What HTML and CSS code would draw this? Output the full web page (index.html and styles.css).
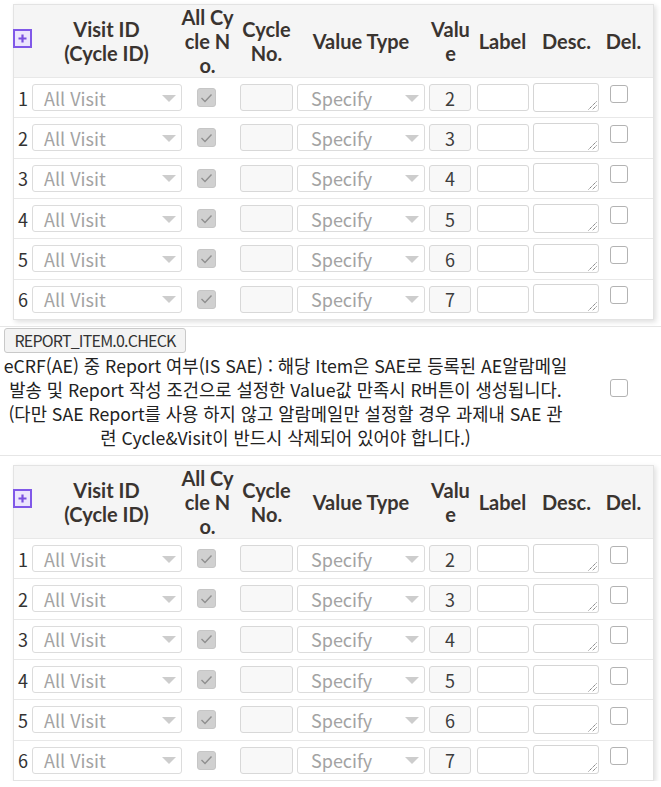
FILE: index.html
```html
<!DOCTYPE html>
<html lang="ko">
<head>
<meta charset="utf-8">
<title>Report Item</title>
<link rel="stylesheet" href="styles.css">
</head>
<body>
<div class="page">
  <div class="card-wrap">
    <div class="card">
      <div class="row head">
        <div class="c c0"><span class="plus"><svg width="11" height="11" viewBox="0 0 11 11"><path d="M5.5 1.5v8M1.5 5.5h8" stroke="#7a4fe0" stroke-width="2.2"/></svg></span></div>
        <div class="c c1"><span class="ln">Visit ID</span><span class="ln">(Cycle ID)</span></div>
        <div class="c c2"><span class="ln">All Cy</span><span class="ln">cle N</span><span class="ln">o.</span></div>
        <div class="c c3"><span class="ln">Cycle</span><span class="ln">No.</span></div>
        <div class="c c4">Value Type</div>
        <div class="c c5"><span class="ln">Valu</span><span class="ln">e</span></div>
        <div class="c c6">Label</div>
        <div class="c c7">Desc.</div>
        <div class="c c8">Del.</div>
      </div>
      <div class="row"><div class="c c0">1</div><div class="c c1"><div class="sel w150"><span>All Visit</span><i class="caret"></i></div></div><div class="c c2"><span class="chk-dis"><svg width="13" height="10" viewBox="0 0 13 10"><path d="M1.5 5l3.5 3.5 6.5-7" fill="none" stroke="#8f8f8f" stroke-width="1.4"/></svg></span></div><div class="c c3"><div class="inp w53 gray"></div></div><div class="c c4"><div class="sel w128 pad2"><span>Specify</span><i class="caret"></i></div></div><div class="c c5"><div class="inp w42 gray val">2</div></div><div class="c c6"><div class="inp w52"></div></div><div class="c c7"><div class="ta"><svg width="10" height="10" viewBox="0 0 10 10"><path d="M9.5 1.5l-8 8M9.5 5.5l-4 4" stroke="#666" stroke-width="1" stroke-dasharray="1.2 0.8"/></svg></div></div><div class="c c8"><span class="chk"></span></div></div>
      <div class="row"><div class="c c0">2</div><div class="c c1"><div class="sel w150"><span>All Visit</span><i class="caret"></i></div></div><div class="c c2"><span class="chk-dis"><svg width="13" height="10" viewBox="0 0 13 10"><path d="M1.5 5l3.5 3.5 6.5-7" fill="none" stroke="#8f8f8f" stroke-width="1.4"/></svg></span></div><div class="c c3"><div class="inp w53 gray"></div></div><div class="c c4"><div class="sel w128 pad2"><span>Specify</span><i class="caret"></i></div></div><div class="c c5"><div class="inp w42 gray val">3</div></div><div class="c c6"><div class="inp w52"></div></div><div class="c c7"><div class="ta"><svg width="10" height="10" viewBox="0 0 10 10"><path d="M9.5 1.5l-8 8M9.5 5.5l-4 4" stroke="#666" stroke-width="1" stroke-dasharray="1.2 0.8"/></svg></div></div><div class="c c8"><span class="chk"></span></div></div>
      <div class="row"><div class="c c0">3</div><div class="c c1"><div class="sel w150"><span>All Visit</span><i class="caret"></i></div></div><div class="c c2"><span class="chk-dis"><svg width="13" height="10" viewBox="0 0 13 10"><path d="M1.5 5l3.5 3.5 6.5-7" fill="none" stroke="#8f8f8f" stroke-width="1.4"/></svg></span></div><div class="c c3"><div class="inp w53 gray"></div></div><div class="c c4"><div class="sel w128 pad2"><span>Specify</span><i class="caret"></i></div></div><div class="c c5"><div class="inp w42 gray val">4</div></div><div class="c c6"><div class="inp w52"></div></div><div class="c c7"><div class="ta"><svg width="10" height="10" viewBox="0 0 10 10"><path d="M9.5 1.5l-8 8M9.5 5.5l-4 4" stroke="#666" stroke-width="1" stroke-dasharray="1.2 0.8"/></svg></div></div><div class="c c8"><span class="chk"></span></div></div>
      <div class="row"><div class="c c0">4</div><div class="c c1"><div class="sel w150"><span>All Visit</span><i class="caret"></i></div></div><div class="c c2"><span class="chk-dis"><svg width="13" height="10" viewBox="0 0 13 10"><path d="M1.5 5l3.5 3.5 6.5-7" fill="none" stroke="#8f8f8f" stroke-width="1.4"/></svg></span></div><div class="c c3"><div class="inp w53 gray"></div></div><div class="c c4"><div class="sel w128 pad2"><span>Specify</span><i class="caret"></i></div></div><div class="c c5"><div class="inp w42 gray val">5</div></div><div class="c c6"><div class="inp w52"></div></div><div class="c c7"><div class="ta"><svg width="10" height="10" viewBox="0 0 10 10"><path d="M9.5 1.5l-8 8M9.5 5.5l-4 4" stroke="#666" stroke-width="1" stroke-dasharray="1.2 0.8"/></svg></div></div><div class="c c8"><span class="chk"></span></div></div>
      <div class="row"><div class="c c0">5</div><div class="c c1"><div class="sel w150"><span>All Visit</span><i class="caret"></i></div></div><div class="c c2"><span class="chk-dis"><svg width="13" height="10" viewBox="0 0 13 10"><path d="M1.5 5l3.5 3.5 6.5-7" fill="none" stroke="#8f8f8f" stroke-width="1.4"/></svg></span></div><div class="c c3"><div class="inp w53 gray"></div></div><div class="c c4"><div class="sel w128 pad2"><span>Specify</span><i class="caret"></i></div></div><div class="c c5"><div class="inp w42 gray val">6</div></div><div class="c c6"><div class="inp w52"></div></div><div class="c c7"><div class="ta"><svg width="10" height="10" viewBox="0 0 10 10"><path d="M9.5 1.5l-8 8M9.5 5.5l-4 4" stroke="#666" stroke-width="1" stroke-dasharray="1.2 0.8"/></svg></div></div><div class="c c8"><span class="chk"></span></div></div>
      <div class="row"><div class="c c0">6</div><div class="c c1"><div class="sel w150"><span>All Visit</span><i class="caret"></i></div></div><div class="c c2"><span class="chk-dis"><svg width="13" height="10" viewBox="0 0 13 10"><path d="M1.5 5l3.5 3.5 6.5-7" fill="none" stroke="#8f8f8f" stroke-width="1.4"/></svg></span></div><div class="c c3"><div class="inp w53 gray"></div></div><div class="c c4"><div class="sel w128 pad2"><span>Specify</span><i class="caret"></i></div></div><div class="c c5"><div class="inp w42 gray val">7</div></div><div class="c c6"><div class="inp w52"></div></div><div class="c c7"><div class="ta"><svg width="10" height="10" viewBox="0 0 10 10"><path d="M9.5 1.5l-8 8M9.5 5.5l-4 4" stroke="#666" stroke-width="1" stroke-dasharray="1.2 0.8"/></svg></div></div><div class="c c8"><span class="chk"></span></div></div>
    </div>
  </div>

  <div class="report">
    <div class="report-main">
      <div class="btn">REPORT_ITEM.0.CHECK</div>
      <div class="desc">eCRF(AE) 중 Report 여부(IS SAE) : 해당 Item은 SAE로 등록된 AE알람메일 발송 및 Report 작성 조건으로 설정한 Value값 만족시 R버튼이 생성됩니다. (다만 SAE Report를 사용 하지 않고 알람메일만 설정할 경우 과제내 SAE 관련 Cycle&amp;Visit이 반드시 삭제되어 있어야 합니다.)</div>
    </div>
    <div class="report-del"><span class="chk"></span></div>
  </div>

  <div class="card-wrap">
    <div class="card">
      <div class="row head">
        <div class="c c0"><span class="plus"><svg width="11" height="11" viewBox="0 0 11 11"><path d="M5.5 1.5v8M1.5 5.5h8" stroke="#7a4fe0" stroke-width="2.2"/></svg></span></div>
        <div class="c c1"><span class="ln">Visit ID</span><span class="ln">(Cycle ID)</span></div>
        <div class="c c2"><span class="ln">All Cy</span><span class="ln">cle N</span><span class="ln">o.</span></div>
        <div class="c c3"><span class="ln">Cycle</span><span class="ln">No.</span></div>
        <div class="c c4">Value Type</div>
        <div class="c c5"><span class="ln">Valu</span><span class="ln">e</span></div>
        <div class="c c6">Label</div>
        <div class="c c7">Desc.</div>
        <div class="c c8">Del.</div>
      </div>
      <div class="row"><div class="c c0">1</div><div class="c c1"><div class="sel w150"><span>All Visit</span><i class="caret"></i></div></div><div class="c c2"><span class="chk-dis"><svg width="13" height="10" viewBox="0 0 13 10"><path d="M1.5 5l3.5 3.5 6.5-7" fill="none" stroke="#8f8f8f" stroke-width="1.4"/></svg></span></div><div class="c c3"><div class="inp w53 gray"></div></div><div class="c c4"><div class="sel w128 pad2"><span>Specify</span><i class="caret"></i></div></div><div class="c c5"><div class="inp w42 gray val">2</div></div><div class="c c6"><div class="inp w52"></div></div><div class="c c7"><div class="ta"><svg width="10" height="10" viewBox="0 0 10 10"><path d="M9.5 1.5l-8 8M9.5 5.5l-4 4" stroke="#666" stroke-width="1" stroke-dasharray="1.2 0.8"/></svg></div></div><div class="c c8"><span class="chk"></span></div></div>
      <div class="row"><div class="c c0">2</div><div class="c c1"><div class="sel w150"><span>All Visit</span><i class="caret"></i></div></div><div class="c c2"><span class="chk-dis"><svg width="13" height="10" viewBox="0 0 13 10"><path d="M1.5 5l3.5 3.5 6.5-7" fill="none" stroke="#8f8f8f" stroke-width="1.4"/></svg></span></div><div class="c c3"><div class="inp w53 gray"></div></div><div class="c c4"><div class="sel w128 pad2"><span>Specify</span><i class="caret"></i></div></div><div class="c c5"><div class="inp w42 gray val">3</div></div><div class="c c6"><div class="inp w52"></div></div><div class="c c7"><div class="ta"><svg width="10" height="10" viewBox="0 0 10 10"><path d="M9.5 1.5l-8 8M9.5 5.5l-4 4" stroke="#666" stroke-width="1" stroke-dasharray="1.2 0.8"/></svg></div></div><div class="c c8"><span class="chk"></span></div></div>
      <div class="row"><div class="c c0">3</div><div class="c c1"><div class="sel w150"><span>All Visit</span><i class="caret"></i></div></div><div class="c c2"><span class="chk-dis"><svg width="13" height="10" viewBox="0 0 13 10"><path d="M1.5 5l3.5 3.5 6.5-7" fill="none" stroke="#8f8f8f" stroke-width="1.4"/></svg></span></div><div class="c c3"><div class="inp w53 gray"></div></div><div class="c c4"><div class="sel w128 pad2"><span>Specify</span><i class="caret"></i></div></div><div class="c c5"><div class="inp w42 gray val">4</div></div><div class="c c6"><div class="inp w52"></div></div><div class="c c7"><div class="ta"><svg width="10" height="10" viewBox="0 0 10 10"><path d="M9.5 1.5l-8 8M9.5 5.5l-4 4" stroke="#666" stroke-width="1" stroke-dasharray="1.2 0.8"/></svg></div></div><div class="c c8"><span class="chk"></span></div></div>
      <div class="row"><div class="c c0">4</div><div class="c c1"><div class="sel w150"><span>All Visit</span><i class="caret"></i></div></div><div class="c c2"><span class="chk-dis"><svg width="13" height="10" viewBox="0 0 13 10"><path d="M1.5 5l3.5 3.5 6.5-7" fill="none" stroke="#8f8f8f" stroke-width="1.4"/></svg></span></div><div class="c c3"><div class="inp w53 gray"></div></div><div class="c c4"><div class="sel w128 pad2"><span>Specify</span><i class="caret"></i></div></div><div class="c c5"><div class="inp w42 gray val">5</div></div><div class="c c6"><div class="inp w52"></div></div><div class="c c7"><div class="ta"><svg width="10" height="10" viewBox="0 0 10 10"><path d="M9.5 1.5l-8 8M9.5 5.5l-4 4" stroke="#666" stroke-width="1" stroke-dasharray="1.2 0.8"/></svg></div></div><div class="c c8"><span class="chk"></span></div></div>
      <div class="row"><div class="c c0">5</div><div class="c c1"><div class="sel w150"><span>All Visit</span><i class="caret"></i></div></div><div class="c c2"><span class="chk-dis"><svg width="13" height="10" viewBox="0 0 13 10"><path d="M1.5 5l3.5 3.5 6.5-7" fill="none" stroke="#8f8f8f" stroke-width="1.4"/></svg></span></div><div class="c c3"><div class="inp w53 gray"></div></div><div class="c c4"><div class="sel w128 pad2"><span>Specify</span><i class="caret"></i></div></div><div class="c c5"><div class="inp w42 gray val">6</div></div><div class="c c6"><div class="inp w52"></div></div><div class="c c7"><div class="ta"><svg width="10" height="10" viewBox="0 0 10 10"><path d="M9.5 1.5l-8 8M9.5 5.5l-4 4" stroke="#666" stroke-width="1" stroke-dasharray="1.2 0.8"/></svg></div></div><div class="c c8"><span class="chk"></span></div></div>
      <div class="row"><div class="c c0">6</div><div class="c c1"><div class="sel w150"><span>All Visit</span><i class="caret"></i></div></div><div class="c c2"><span class="chk-dis"><svg width="13" height="10" viewBox="0 0 13 10"><path d="M1.5 5l3.5 3.5 6.5-7" fill="none" stroke="#8f8f8f" stroke-width="1.4"/></svg></span></div><div class="c c3"><div class="inp w53 gray"></div></div><div class="c c4"><div class="sel w128 pad2"><span>Specify</span><i class="caret"></i></div></div><div class="c c5"><div class="inp w42 gray val">7</div></div><div class="c c6"><div class="inp w52"></div></div><div class="c c7"><div class="ta"><svg width="10" height="10" viewBox="0 0 10 10"><path d="M9.5 1.5l-8 8M9.5 5.5l-4 4" stroke="#666" stroke-width="1" stroke-dasharray="1.2 0.8"/></svg></div></div><div class="c c8"><span class="chk"></span></div></div>
    </div>
  </div>
</div>
</body>
</html>
```

FILE: styles.css
```css
* { box-sizing: border-box; }
html, body { margin: 0; padding: 0; background: #fff; }
body {
  font-family: "Noto Sans CJK KR", "Noto Sans", sans-serif;
  font-size: 18px;
  color: #333;
  width: 661px;
  overflow: hidden;
}
.page { padding-top: 4px; }
.card-wrap { padding: 0 7px 0 13px; }
.card {
  border: 1px solid #e3e3e3;
  background: #fff;
  box-shadow: 2px 2px 5px rgba(0,0,0,0.13);
}
.row {
  display: grid;
  grid-template-columns: 16px 153px 55px 57px 132px 47px 57px 71px 51px;
  height: 40.33px;
  border-top: 1px solid #e8e8e8;
}
.row.head {
  height: 72px;
  border-top: 0;
  background: #f5f5f5;
  font-family: Lato, "Noto Sans CJK KR", sans-serif;
  font-weight: bold;
  font-size: 20px;
  line-height: 24px;
  color: #3a3430;
}
.c {
  display: flex;
  align-items: center;
  min-width: 0;
}
.head .c {
  flex-direction: column;
  justify-content: center;
  text-align: center;
  padding: 0;
  white-space: nowrap;
}
.ln {
  display: block;
  height: 24px;
}
.head .c2 { padding-left: 0; margin-left: -6px; }
.head .c0 { align-items: flex-start; padding: 0; }
.head .c8 { padding-right: 8px; }

.plus {
  display: flex;
  align-items: center;
  justify-content: center;
  width: 19px;
  height: 19px;
  margin-left: -1px;
  margin-top: -6px;
  border: 2px solid #8058e8;
  background: #ece5fd;
}
.plus svg { display: block; }

.c0 { justify-content: flex-start; padding-left: 4px; }
.c1 { padding-left: 2px; }
.c2 { padding-left: 14px; }
.c3 { padding-left: 2px; }
.c4 { padding-left: 2px; }
.c5 { padding-left: 2px; }
.c6 { padding-left: 3px; }
.c7 { padding-left: 2px; }
.c8 { padding-left: 8px; }

.sel {
  height: 27px;
  border: 1px solid #dcdcdc;
  border-radius: 3px;
  background: #fff;
  display: flex;
  align-items: center;
  justify-content: space-between;
  padding: 0 5px 0 11px;
  color: #a3a3a3;
}
.sel.pad2 { padding-left: 13px; }
.w150 { width: 150px; }
.w128 { width: 128px; }
.caret {
  width: 0; height: 0;
  border-left: 7px solid transparent;
  border-right: 7px solid transparent;
  border-top: 7px solid #cdcdcd;
  margin-top: 1px;
}
.inp {
  height: 27px;
  border: 1px solid #d8d8d8;
  border-radius: 3px;
  background: #fff;
}
.inp.gray { background: #f8f8f8; }
.w53 { width: 53px; }
.w42 { width: 42px; }
.w52 { width: 52px; }
.val {
  display: flex;
  align-items: center;
  justify-content: center;
  color: #3d3d3d;
}
.ta {
  width: 66px;
  height: 29px;
  margin-top: -1px;
  border: 1px solid #d5d5d5;
  border-radius: 3px;
  background: #fff;
  display: flex;
  align-items: flex-end;
  justify-content: flex-end;
  padding: 0 1px 1px 0;
}
.ta svg { display: block; }
.chk-dis {
  width: 19px;
  height: 19px;
  border: 1px solid #c6c6c6;
  border-radius: 3px;
  background: #d0d0d0;
  display: flex;
  align-items: center;
  justify-content: center;
}
.chk-dis svg { display: block; }
.chk {
  display: block;
  width: 18px;
  height: 18px;
  margin-top: -8px;
  border: 1.5px solid #b3b3b3;
  border-radius: 3px;
  background: #fff;
}

.report {
  margin-top: 6px;
  margin-bottom: 9px;
  border-top: 1px solid #e6e6e6;
  border-bottom: 1px solid #e6e6e6;
  display: flex;
  padding: 1px 0 6px;
}
.report-main { width: 571px; }
.btn {
  margin-left: 4px;
  width: 182px;
  height: 25px;
  border: 1px solid #c9c9c9;
  border-radius: 3px;
  background: #f3f3f3;
  font-size: 16px;
  letter-spacing: -0.8px;
  line-height: 23px;
  text-align: center;
  color: #333;
}
.desc {
  width: 567px;
  margin-left: 2px;
  text-align: center;
  font-size: 17.7px;
  line-height: 24px;
  color: #222;
}
.report-del {
  flex: 1;
  display: flex;
  align-items: center;
  padding-left: 39px;
}
.report-del .chk { margin-top: 0; }
```
